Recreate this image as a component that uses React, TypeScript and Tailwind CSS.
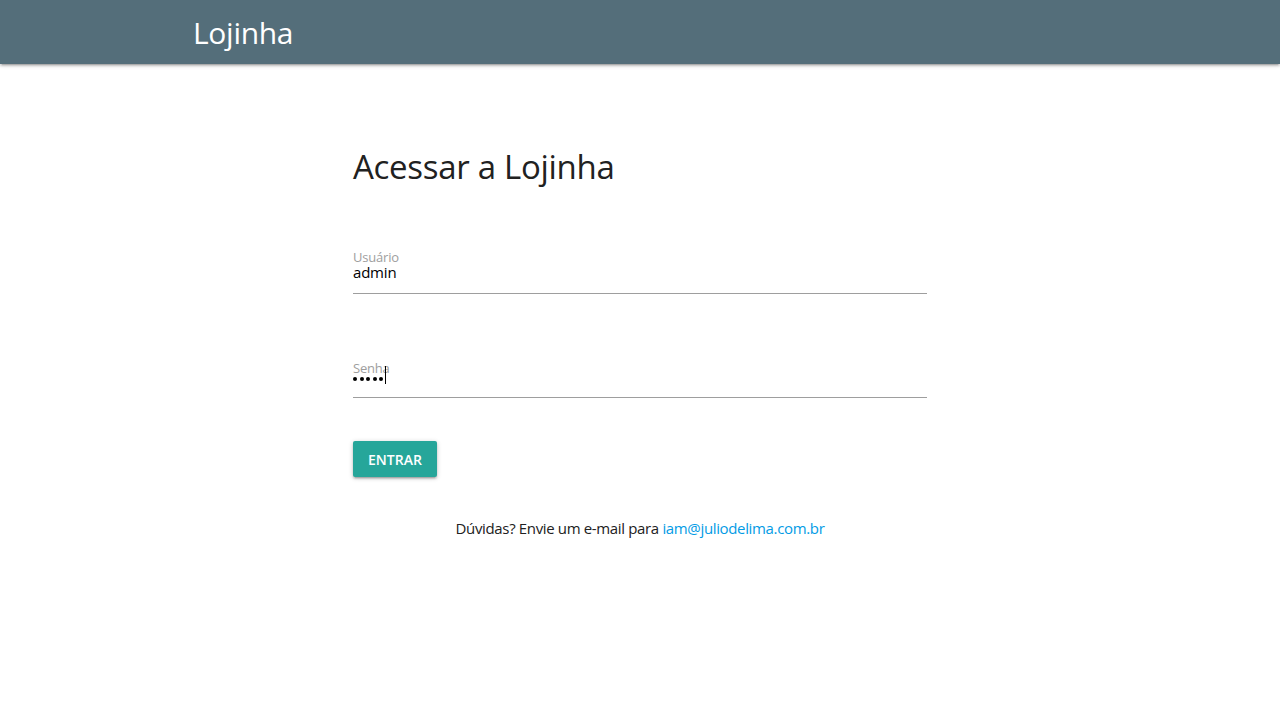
export default function App() {
  const font = { fontFamily: '"Open Sans", "Noto Sans", sans-serif' };
  return (
    <div className="min-h-screen bg-white text-[#212121]" style={font}>
      <nav className="h-16 bg-[#546e7a] shadow-[0_2px_2px_0_rgba(0,0,0,0.14),0_3px_1px_-2px_rgba(0,0,0,0.12),0_1px_5px_0_rgba(0,0,0,0.2)]">
        <div className="mx-auto w-[896px] flex items-center h-16">
          <span className="text-white text-[30px] leading-none pl-[1px] tracking-[-0.3px] mt-[2px]">Lojinha</span>
        </div>
      </nav>
      <main className="mx-auto w-[574px] pt-[83px]">
        <h1 className="text-[33px] leading-[40px] text-[#212121] tracking-[-0.3px]">Acessar a Lojinha</h1>
        <div className="mt-[63px] relative">
          <div className="text-[13px] leading-[14px] text-[#9e9e9e] tracking-[-0.2px]">Usuário</div>
          <div className="text-[15px] leading-[16px] text-black tracking-[-0.2px]">admin</div>
          <div className="mt-[13px] h-px bg-[#9e9e9e]" />
        </div>
        <div className="mt-[66px] relative h-[38px]">
          <div className="absolute left-0 top-[1px] text-[13px] leading-[14px] text-[#9e9e9e] tracking-[-0.2px]">Senha</div>
          <div className="absolute left-0 top-[6px] flex items-center h-[18px]">
            <span className="flex items-center gap-[2.5px] mt-[8px]">
              <span className="w-[4px] h-[4px] rounded-full bg-black" />
              <span className="w-[4px] h-[4px] rounded-full bg-black" />
              <span className="w-[4px] h-[4px] rounded-full bg-black" />
              <span className="w-[4px] h-[4px] rounded-full bg-black" />
              <span className="w-[4px] h-[4px] rounded-full bg-black" />
            </span>
            <span className="ml-[1.5px] w-px h-[18px] bg-black" />
          </div>
          <div className="absolute left-0 right-0 bottom-0 h-px bg-[#9e9e9e]" />
        </div>
        <button className="mt-[43px] h-9 px-[15px] bg-[#26a69a] text-white text-[14px] font-semibold uppercase rounded-[2px] tracking-[0px] shadow-[0_2px_2px_0_rgba(0,0,0,0.14),0_3px_1px_-2px_rgba(0,0,0,0.12),0_1px_5px_0_rgba(0,0,0,0.2)]">
          Entrar
        </button>
        <p className="mt-[41px] text-center text-[15px] leading-[20px] text-[#212121] tracking-[-0.35px]">
          Dúvidas? Envie um e-mail para <a className="text-[#039be5]">iam@juliodelima.com.br</a>
        </p>
      </main>
    </div>
  );
}
